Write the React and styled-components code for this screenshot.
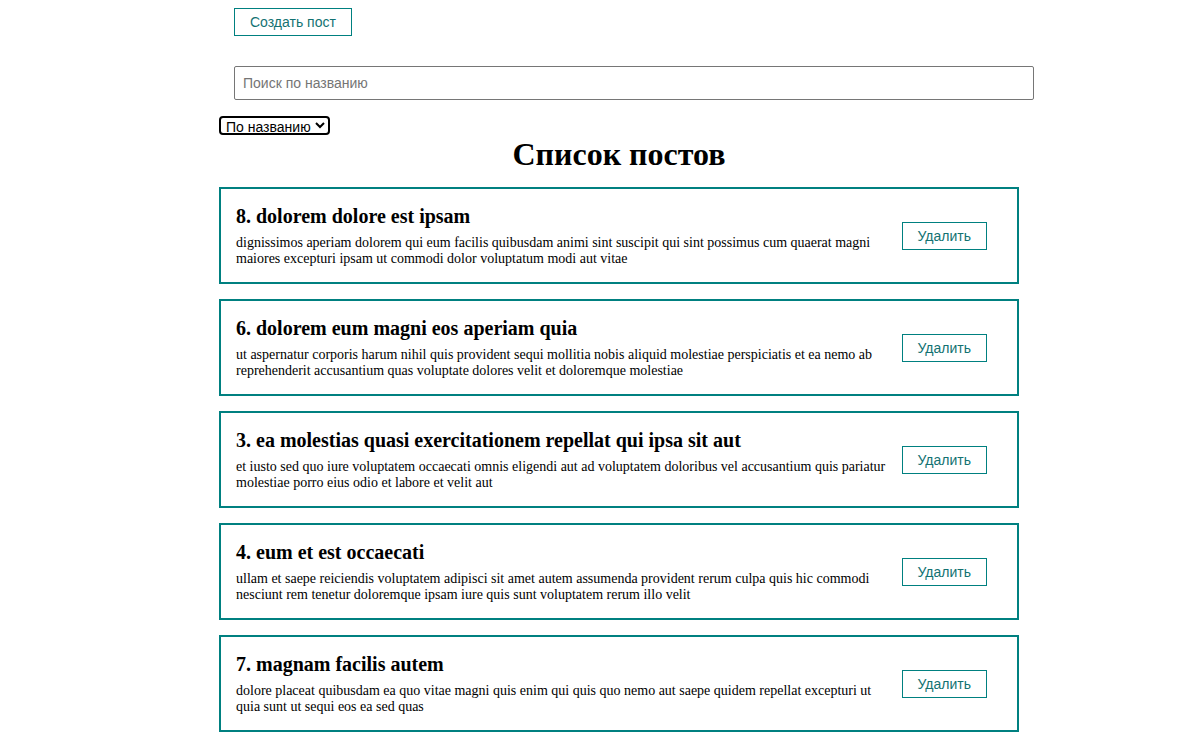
import React, { useState } from "react";
import styled, { createGlobalStyle } from "styled-components";

const GlobalStyle = createGlobalStyle`
    body {
        margin: 0;
        background: #fff;
        font-family: "Liberation Serif", "Times New Roman", serif;
        color: #000;
    }
`;

const Page = styled.div`
    width: 800px;
    margin-left: 219px;
`;

const TopBar = styled.div`
    display: flex;
    flex-flow: column nowrap;
    align-items: flex-start;
    padding: 8px 0 0 15px;
`;

const OutlineButton = styled.button`
    box-sizing: border-box;
    padding: 5px 15px;
    border: 1px solid teal;
    border-radius: 0;
    background: #fff;
    color: #137272;
    font-family: "Liberation Sans", Arial, sans-serif;
    font-size: 14px;
    line-height: 16px;
    cursor: pointer;
`;

const SearchInput = styled.input`
    box-sizing: border-box;
    width: 800px;
    height: 34px;
    margin-top: 30px;
    padding: 8px;
    border: 1px solid #767676;
    border-radius: 2px;
    font-family: "Liberation Sans", Arial, sans-serif;
    font-size: 14px;
    outline: none;

    &::placeholder {
        color: #757575;
    }
`;

const SortSelect = styled.select`
    display: block;
    box-sizing: border-box;
    height: 19px;
    margin-top: 16px;
    padding: 0 0 0 1px;
    border: 2px solid #000;
    border-radius: 4px;
    background: #fff;
    font-family: "Liberation Sans", Arial, sans-serif;
    font-size: 14px;
    line-height: 15px;
    color: #000;
`;

const Title = styled.h1`
    margin: 2px 0 15px;
    font-size: 32px;
    line-height: 35px;
    font-weight: bold;
    text-align: center;
`;

const PostCard = styled.div`
    display: flex;
    flex-flow: row nowrap;
    align-items: center;
    margin-bottom: 15px;
    padding: 15px;
    border: 2px solid teal;
`;

const PostContent = styled.div`
    flex: 1 1 auto;
`;

const PostTitle = styled.h3`
    margin: 0 0 7px;
    font-size: 20px;
    line-height: 24px;
    font-weight: bold;
`;

const PostBody = styled.div`
    font-size: 14px;
    line-height: 16px;
`;

const DeleteButton = styled(OutlineButton)`
    flex: 0 0 auto;
    margin: 0 15px;
`;

const initialPosts = [
    { id: 8, title: "dolorem dolore est ipsam", body: "dignissimos aperiam dolorem qui eum facilis quibusdam animi sint suscipit qui sint possimus cum quaerat magni maiores excepturi ipsam ut commodi dolor voluptatum modi aut vitae" },
    { id: 6, title: "dolorem eum magni eos aperiam quia", body: "ut aspernatur corporis harum nihil quis provident sequi mollitia nobis aliquid molestiae perspiciatis et ea nemo ab reprehenderit accusantium quas voluptate dolores velit et doloremque molestiae" },
    { id: 3, title: "ea molestias quasi exercitationem repellat qui ipsa sit aut", body: "et iusto sed quo iure voluptatem occaecati omnis eligendi aut ad voluptatem doloribus vel accusantium quis pariatur molestiae porro eius odio et labore et velit aut" },
    { id: 4, title: "eum et est occaecati", body: "ullam et saepe reiciendis voluptatem adipisci sit amet autem assumenda provident rerum culpa quis hic commodi nesciunt rem tenetur doloremque ipsam iure quis sunt voluptatem rerum illo velit" },
    { id: 7, title: "magnam facilis autem", body: "dolore placeat quibusdam ea quo vitae magni quis enim qui quis quo nemo aut saepe quidem repellat excepturi ut quia sunt ut sequi eos ea sed quas" },
];

const App = () => {
    const [posts, setPosts] = useState(initialPosts);
    const [query, setQuery] = useState("");

    const removePost = (id) => setPosts(posts.filter(p => p.id !== id));
    const visible = posts.filter(p => p.title.toLowerCase().includes(query.toLowerCase()));

    return (
        <Page>
            <GlobalStyle />
            <TopBar>
                <OutlineButton>Создать пост</OutlineButton>
                <SearchInput
                    placeholder="Поиск по названию"
                    value={query}
                    onChange={e => setQuery(e.target.value)}
                />
            </TopBar>
            <SortSelect defaultValue="title">
                <option value="title">По названию</option>
                <option value="body">По описанию</option>
            </SortSelect>
            <Title>Список постов</Title>
            {visible.map(post => (
                <PostCard key={post.id}>
                    <PostContent>
                        <PostTitle>{post.id}. {post.title}</PostTitle>
                        <PostBody>{post.body}</PostBody>
                    </PostContent>
                    <DeleteButton onClick={() => removePost(post.id)}>Удалить</DeleteButton>
                </PostCard>
            ))}
        </Page>
    );
};

export default App;
